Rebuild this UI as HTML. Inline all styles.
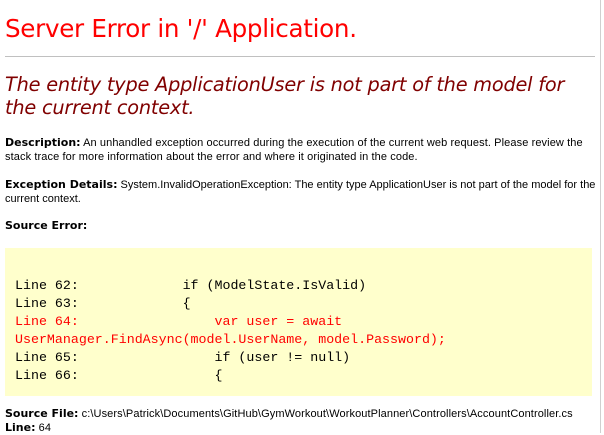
<!DOCTYPE html>
<html><head><style>
body{margin:0;background:#fff;width:604px;height:433px;overflow:hidden;position:relative;font-family:"Liberation Sans",Arial,sans-serif;}
.a{position:absolute;left:5px;white-space:nowrap;}
h1{position:absolute;left:5px;top:14px;margin:0;font:normal 24.6px "DejaVu Sans",Verdana,sans-serif;color:#ff0000;letter-spacing:-0.3px;}
hr{position:absolute;left:5px;top:56px;width:590px;margin:0;border:0;border-top:1px solid #c0c0c0;}
h2{position:absolute;left:5px;top:73px;margin:0;font:italic 19.3px/23px "DejaVu Sans",Verdana,sans-serif;color:#800000;width:592px;letter-spacing:-0.2px;}
.t{font-size:11px;line-height:14px;color:#000;letter-spacing:0.1px;}
b{font-family:"DejaVu Sans",Verdana,sans-serif;font-size:11px;letter-spacing:0;}
.code{position:absolute;left:5px;top:248px;width:587px;height:148px;background:#ffffcc;}
pre{position:absolute;left:15px;top:277px;margin:0;font:13.3px/18px "Liberation Mono",monospace;color:#000;}
.r{color:#ff0000;}
.sb{position:absolute;left:600px;top:0;width:1px;height:433px;background:#d0d0d0;}
</style></head><body>
<h1>Server Error in '/' Application.</h1>
<hr>
<h2>The entity type ApplicationUser is not part of the model for the current context.</h2>
<div class="a t" style="top:136px"><b>Description:</b> An unhandled exception occurred during the execution of the current web request. Please review the<br>stack trace for more information about the error and where it originated in the code.</div>
<div class="a t" style="top:178px;letter-spacing:0"><b>Exception Details:</b> System.InvalidOperationException: The entity type ApplicationUser is not part of the model for the<br>current context.</div>
<div class="a t" style="top:219px"><b>Source Error:</b></div>
<div class="code"></div>
<pre>Line 62:             if (ModelState.IsValid)
Line 63:             {
<span class="r">Line 64:                 var user = await
UserManager.FindAsync(model.UserName, model.Password);</span>
Line 65:                 if (user != null)
Line 66:                 {</pre>
<div class="a t" style="top:407px"><b>Source File:</b> c:\Users\Patrick\Documents\GitHub\GymWorkout\WorkoutPlanner\Controllers\AccountController.cs</div>
<div class="a t" style="top:421px"><b>Line:</b> 64</div>
<div class="sb"></div>
</body></html>
